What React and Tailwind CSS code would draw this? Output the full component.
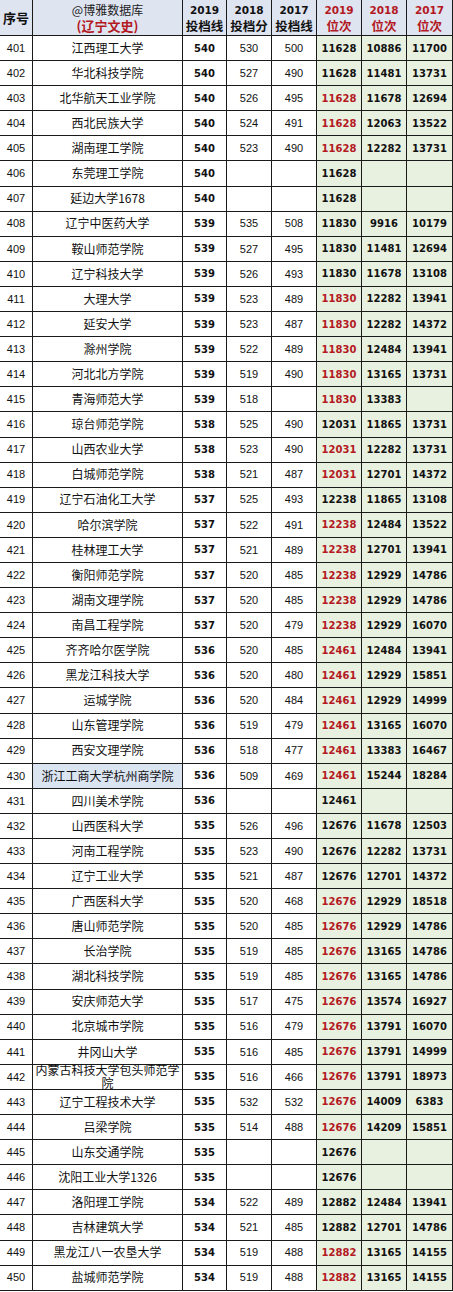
const data = [
  [401, '江西理工大学', 540, 530, 500, 11628, 10886, 11700],
  [402, '华北科技学院', 540, 527, 490, 11628, 11481, 13731],
  [403, '北华航天工业学院', 540, 526, 495, 11628, 11678, 12694],
  [404, '西北民族大学', 540, 524, 491, 11628, 12063, 13522],
  [405, '湖南理工学院', 540, 523, 490, 11628, 12282, 13731],
  [406, '东莞理工学院', 540, '', '', 11628, '', ''],
  [407, '延边大学1678', 540, '', '', 11628, '', ''],
  [408, '辽宁中医药大学', 539, 535, 508, 11830, 9916, 10179],
  [409, '鞍山师范学院', 539, 527, 495, 11830, 11481, 12694],
  [410, '辽宁科技大学', 539, 526, 493, 11830, 11678, 13108],
  [411, '大理大学', 539, 523, 489, 11830, 12282, 13941],
  [412, '延安大学', 539, 523, 487, 11830, 12282, 14372],
  [413, '滁州学院', 539, 522, 489, 11830, 12484, 13941],
  [414, '河北北方学院', 539, 519, 490, 11830, 13165, 13731],
  [415, '青海师范大学', 539, 518, '', 11830, 13383, ''],
  [416, '琼台师范学院', 538, 525, 490, 12031, 11865, 13731],
  [417, '山西农业大学', 538, 523, 490, 12031, 12282, 13731],
  [418, '白城师范学院', 538, 521, 487, 12031, 12701, 14372],
  [419, '辽宁石油化工大学', 537, 525, 493, 12238, 11865, 13108],
  [420, '哈尔滨学院', 537, 522, 491, 12238, 12484, 13522],
  [421, '桂林理工大学', 537, 521, 489, 12238, 12701, 13941],
  [422, '衡阳师范学院', 537, 520, 485, 12238, 12929, 14786],
  [423, '湖南文理学院', 537, 520, 485, 12238, 12929, 14786],
  [424, '南昌工程学院', 537, 520, 479, 12238, 12929, 16070],
  [425, '齐齐哈尔医学院', 536, 520, 485, 12461, 12484, 13941],
  [426, '黑龙江科技大学', 536, 520, 480, 12461, 12929, 15851],
  [427, '运城学院', 536, 520, 484, 12461, 12929, 14999],
  [428, '山东管理学院', 536, 519, 479, 12461, 13165, 16070],
  [429, '西安文理学院', 536, 518, 477, 12461, 13383, 16467],
  [430, '浙江工商大学杭州商学院', 536, 509, 469, 12461, 15244, 18284],
  [431, '四川美术学院', 536, '', '', 12461, '', ''],
  [432, '山西医科大学', 535, 526, 496, 12676, 11678, 12503],
  [433, '河南工程学院', 535, 523, 490, 12676, 12282, 13731],
  [434, '辽宁工业大学', 535, 521, 487, 12676, 12701, 14372],
  [435, '广西医科大学', 535, 520, 468, 12676, 12929, 18518],
  [436, '唐山师范学院', 535, 520, 485, 12676, 12929, 14786],
  [437, '长治学院', 535, 519, 485, 12676, 13165, 14786],
  [438, '湖北科技学院', 535, 519, 485, 12676, 13165, 14786],
  [439, '安庆师范大学', 535, 517, 475, 12676, 13574, 16927],
  [440, '北京城市学院', 535, 516, 479, 12676, 13791, 16070],
  [441, '井冈山大学', 535, 516, 485, 12676, 13791, 14999],
  [442, '内蒙古科技大学包头师范学院', 535, 516, 466, 12676, 13791, 18973],
  [443, '辽宁工程技术大学', 535, 532, 532, 12676, 14009, 6383],
  [444, '吕梁学院', 535, 514, 488, 12676, 14209, 15851],
  [445, '山东交通学院', 535, '', '', 12676, '', ''],
  [446, '沈阳工业大学1326', 535, '', '', 12676, '', ''],
  [447, '洛阳理工学院', 534, 522, 489, 12882, 12484, 13941],
  [448, '吉林建筑大学', 534, 521, 485, 12882, 12701, 14786],
  [449, '黑龙江八一农垦大学', 534, 519, 488, 12882, 13165, 14155],
  [450, '盐城师范学院', 534, 519, 488, 12882, 13165, 14155],
];

// rows whose 2019 rank is printed in red
const red = new Set([403, 404, 405, 411, 412, 413, 414, 415, 417, 418, 420, 421, 422, 423, 424, 425, 426, 427, 428, 429, 430, 435, 436, 437, 438, 439, 440, 441, 442, 443, 444, 449, 450]);

const cell = 'flex items-center justify-center border-r border-b border-[#1a1a1a] text-center';
const cjk = "font-['Noto_Sans_CJK_SC',sans-serif]";
const plain = "font-['Liberation_Sans',sans-serif] text-[11px] text-[#111]";
const bold = "font-['DejaVu_Sans',sans-serif] font-bold text-[10px] text-[#111]";

const Head = ({ year, label, redText }) => (
  <div className={`${cell} flex-col bg-[#dfe4f1] leading-[15px] font-bold ${redText ? 'text-[#b3191f]' : 'text-[#111]'}`}>
    <span className="font-['DejaVu_Sans',sans-serif] text-[10.5px]">{year}</span>
    <span className={`${cjk} text-[12.5px]`}>{label}</span>
  </div>
);

export default function App() {
  return (
    <div className="w-[453px] bg-white">
      <div className="grid grid-cols-[33px_150px_44px_45px_45px_45px_45px_46px] grid-rows-[36px] auto-rows-[25.1px]">
        <div className={`${cell} bg-[#dfe4f1] ${cjk} font-bold text-[13px] text-[#111]`}>序号</div>
        <div className={`${cell} flex-col bg-[#dfe4f1] ${cjk} leading-[16px]`}>
          <span className="text-[12px] text-[#222]">@博雅数据库</span>
          <span className="text-[13px] font-bold text-[#b3191f]">(辽宁文史)</span>
        </div>
        <Head year="2019" label="投档线" />
        <Head year="2018" label="投档分" />
        <Head year="2017" label="投档线" />
        <Head year="2019" label="位次" redText />
        <Head year="2018" label="位次" redText />
        <Head year="2017" label="位次" redText />

        {data.map(([no, name, s19, s18, s17, r19, r18, r17]) => (
          <div key={no} className="contents">
            <div className={`${cell} ${plain}`}>{no}</div>
            <div className={`${cell} ${cjk} text-[12px] leading-[12.5px] text-[#111] ${no === 430 ? 'bg-[#dbe4f1]' : ''}`}>{name}</div>
            <div className={`${cell} ${bold}`}>{s19}</div>
            <div className={`${cell} ${plain}`}>{s18}</div>
            <div className={`${cell} ${plain}`}>{s17}</div>
            <div className={`${cell} ${bold} bg-[#e8f0df] ${red.has(no) ? 'text-[#b3191f]' : ''}`}>{r19}</div>
            <div className={`${cell} ${bold} bg-[#e8f0df]`}>{r18}</div>
            <div className={`${cell} ${bold} bg-[#e8f0df]`}>{r17}</div>
          </div>
        ))}
      </div>
    </div>
  );
}
